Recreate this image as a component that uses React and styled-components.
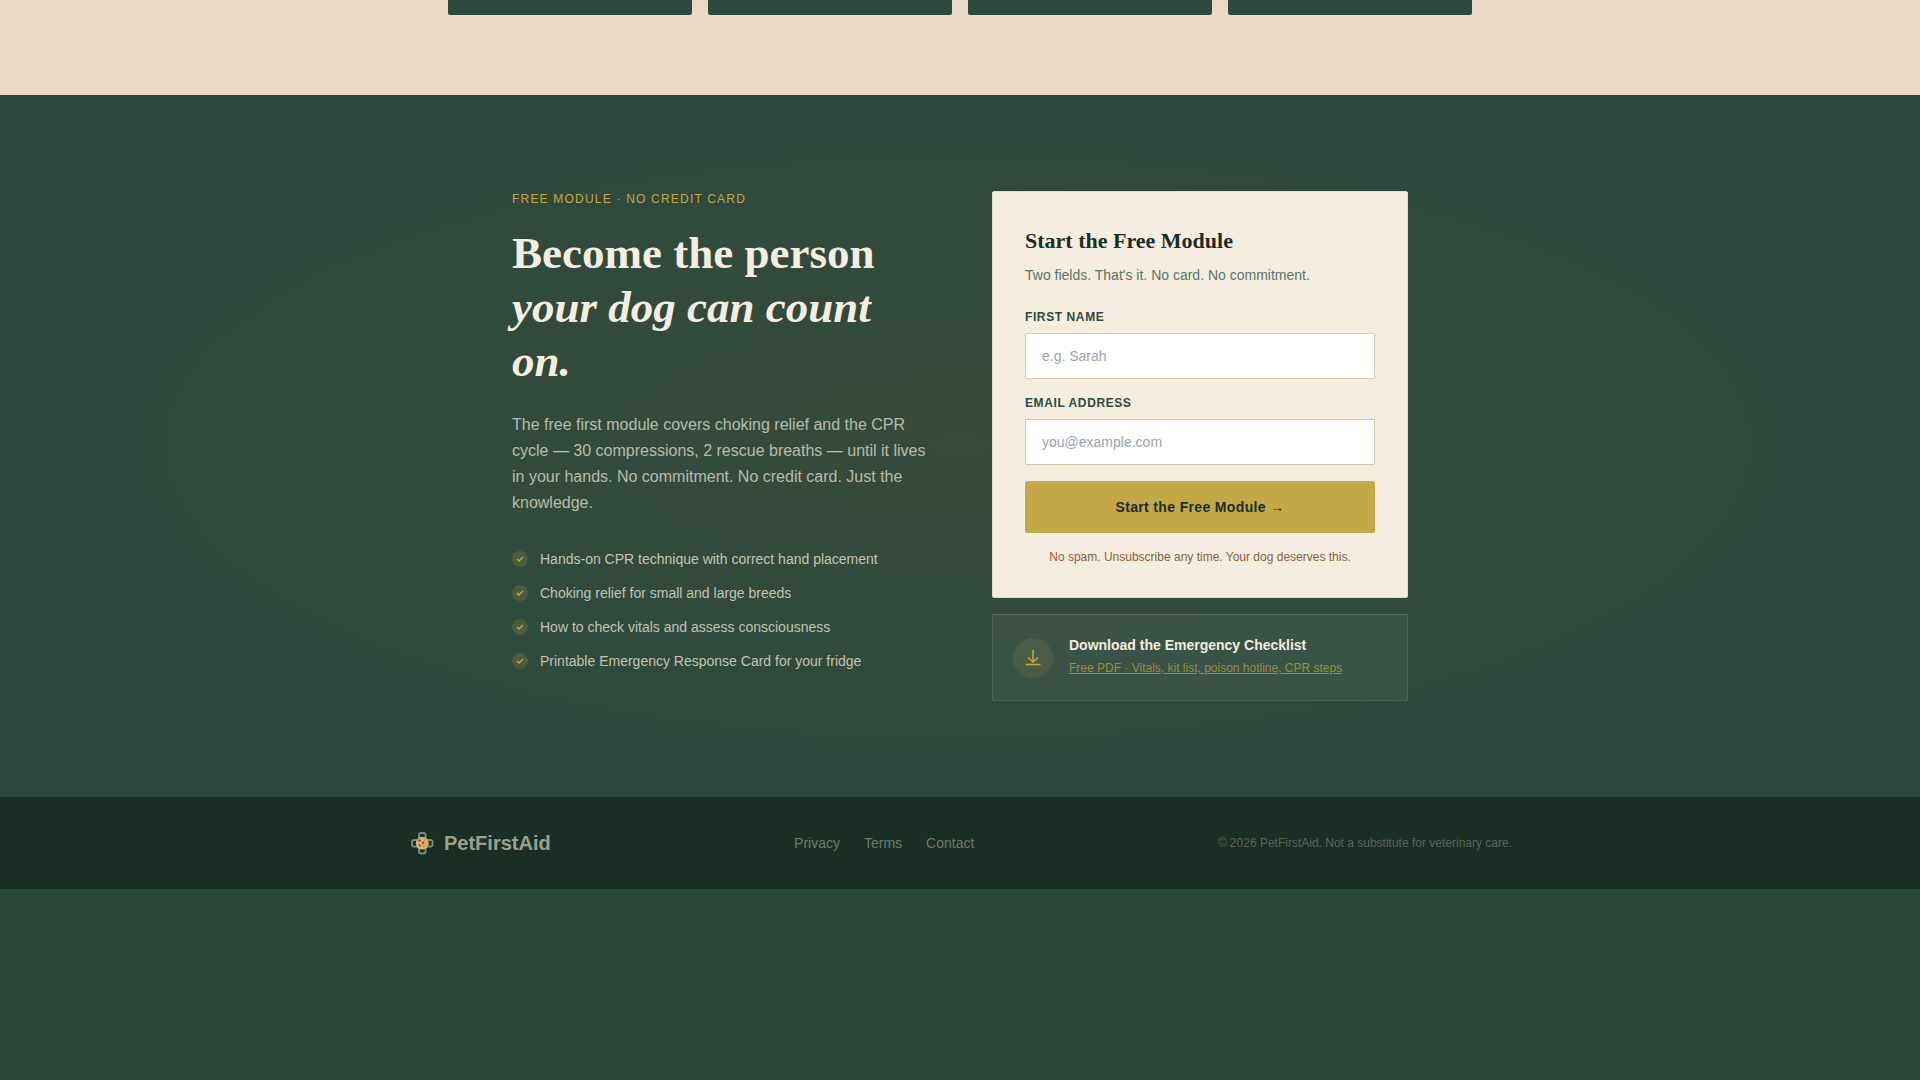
import React from 'react';
import styled, { createGlobalStyle } from 'styled-components';

const GlobalStyle = createGlobalStyle`
  *, *::before, *::after {
    box-sizing: border-box;
  }

  body {
    margin: 0;
    background: #284938;
    color: #f5eddf;
    font-family: 'Liberation Sans', Arial, sans-serif;
    font-size: 16px;
  }

  h1, h2, h3, p, ul {
    margin: 0;
    padding: 0;
  }
`;

const StatsSection = styled.section`
  padding: 0 24px 80px;
  background: #e9d9c5;
`;

const StatsGrid = styled.div`
  max-width: 1024px;
  margin: 0 auto;
  display: grid;
  grid-template-columns: repeat(4, 1fr);
  gap: 16px;
`;

const StatCard = styled.div`
  padding-top: 15px;
  background: #2d4a3e;
  border-radius: 0 0 2px 2px;
`;

const SignupSection = styled.section`
  padding: 96px 24px;
  background:
    radial-gradient(ellipse at 50% 50%, rgba(139, 74, 35, 0.1) 0%, transparent 65%),
    #2d4a3e;
`;

const SignupGrid = styled.div`
  max-width: 896px;
  margin: 0 auto;
  display: grid;
  grid-template-columns: 1fr 1fr;
  align-items: start;
  gap: 64px;
`;

const Eyebrow = styled.p`
  margin-bottom: 19px;
  color: #c4a747;
  font-size: 12px;
  line-height: 16px;
  letter-spacing: 0.1em;
  text-transform: uppercase;
`;

const Heading = styled.h2`
  margin-bottom: 24px;
  font-family: 'Liberation Serif', 'Times New Roman', serif;
  font-size: 45px;
  font-weight: 700;
  line-height: 54px;
`;

const Lead = styled.p`
  margin-bottom: 32px;
  color: rgba(245, 237, 223, 0.7);
  font-size: 16px;
  line-height: 26px;
`;

const Benefits = styled.ul`
  display: flex;
  flex-direction: column;
  gap: 12px;
  list-style: none;
`;

const Benefit = styled.li`
  display: flex;
  align-items: center;
  gap: 12px;
  color: rgba(245, 237, 223, 0.75);
  font-size: 14px;
  line-height: 22px;
`;

const IconCircle = styled.span`
  flex: none;
  display: flex;
  align-items: center;
  justify-content: center;
  width: ${({ $size }) => $size}px;
  height: ${({ $size }) => $size}px;
  border-radius: 50%;
  background: rgba(196, 167, 71, ${({ $alpha }) => $alpha});
`;

const SignupColumn = styled.div`
  display: flex;
  flex-direction: column;
  gap: 16px;
`;

const FormCard = styled.form`
  padding: 32px;
  border: 1px solid #e8d9c5;
  border-radius: 2px;
  background: #f5eddf;
`;

const FormTitle = styled.h3`
  margin-bottom: 6px;
  color: #1a2e25;
  font-family: 'Liberation Serif', 'Times New Roman', serif;
  font-size: 22px;
  font-weight: 700;
  line-height: 34px;
`;

const FormNote = styled.p`
  margin-bottom: 23px;
  color: #5a7364;
  font-size: 14px;
  line-height: 22px;
`;

const Field = styled.div`
  margin-bottom: 16px;
`;

const Label = styled.label`
  display: block;
  margin-bottom: 8px;
  color: #2d4a3e;
  font-size: 12px;
  font-weight: 700;
  line-height: 16px;
  letter-spacing: 0.05em;
  text-transform: uppercase;
`;

const Input = styled.input`
  display: block;
  width: 100%;
  height: 46px;
  padding: 0 16px;
  border: 1px solid #d9c8ae;
  border-radius: 1px;
  background: #fff;
  color: #1a2e25;
  font-family: inherit;
  font-size: 14px;

  &::placeholder {
    color: #9ca3af;
  }
`;

const SubmitButton = styled.button`
  width: 100%;
  height: 52px;
  border: 0;
  border-radius: 2px;
  background: #c4a747;
  color: #1a2e25;
  font-family: inherit;
  font-size: 14px;
  font-weight: 700;
  letter-spacing: 0.025em;
  cursor: pointer;
`;

const FinePrint = styled.p`
  margin-top: 16px;
  color: #8b5e3c;
  font-size: 12px;
  line-height: 16px;
  text-align: center;
`;

const ChecklistCard = styled.div`
  display: flex;
  align-items: center;
  gap: 16px;
  padding: 20px;
  border: 1px solid rgba(245, 237, 223, 0.12);
  border-radius: 2px;
  background: rgba(245, 237, 223, 0.06);
`;

const ChecklistTitle = styled.p`
  margin-bottom: 2px;
  font-size: 14px;
  font-weight: 700;
  line-height: 20px;
`;

const ChecklistLink = styled.a`
  display: block;
  color: rgba(196, 167, 71, 0.7);
  font-size: 12px;
  line-height: 23px;
`;

const Footer = styled.footer`
  padding: 32px 24px;
  background: #1a2e25;
`;

const FooterInner = styled.div`
  max-width: 1104px;
  margin: 0 auto;
  display: flex;
  align-items: center;
  justify-content: space-between;
`;

const Brand = styled.div`
  display: flex;
  align-items: center;
  gap: 8px;
  color: rgba(245, 237, 223, 0.6);
  font-size: 20px;
  font-weight: 700;
  line-height: 28px;
`;

const FooterNav = styled.nav`
  display: flex;
  gap: 24px;
`;

const FooterLink = styled.a`
  color: rgba(245, 237, 223, 0.4);
  font-size: 14px;
  text-decoration: none;
`;

const Copyright = styled.p`
  color: rgba(245, 237, 223, 0.3);
  font-size: 12px;
`;

const benefits = [
  'Hands-on CPR technique with correct hand placement',
  'Choking relief for small and large breeds',
  'How to check vitals and assess consciousness',
  'Printable Emergency Response Card for your fridge',
];

const CheckIcon = () => (
  <svg width="8" height="8" viewBox="0 0 8 8" fill="none" aria-hidden="true">
    <path d="M1 4l2 2 4-4" stroke="#c4a747" strokeWidth="1.4" />
  </svg>
);

const DownloadIcon = () => (
  <svg width="18" height="18" viewBox="0 0 18 18" fill="none" aria-hidden="true">
    <path d="M9 1v12M4 8.500l5 4.500 5-4.500M1.500 15.500h15" stroke="#c4a747" strokeWidth="1.5" />
  </svg>
);

const Logo = () => (
  <svg width="28" height="28" viewBox="0 0 28 28" fill="none" aria-hidden="true">
    <g stroke="#76907c" strokeWidth="1.9">
      <rect x="11" y="4" width="6.600" height="8" rx="2.200" />
      <rect x="11" y="16.500" width="6.600" height="8" rx="2.200" />
      <rect x="4" y="11" width="8" height="6.600" rx="2.200" />
      <rect x="16.500" y="11" width="8" height="6.600" rx="2.200" />
    </g>
    <circle cx="14.200" cy="14.200" r="6.400" fill="#dfae74" />
    <path d="M15 8a6.400 6.400 0 0 1 3.500 11l-3-3.500z" fill="#dfb04c" />
    <path
      d="M9.500 11.500l2-1.500 1.800 1.300-1 1.700zM13.500 13l2.200-.8.600 2-1.800 1.200zM10.300 14.800l2 .3.800 2-1.700.6z"
      fill="#93532f"
    />
    <path d="M15.600 10.200l1.300.6-.4 1zM14.600 17.200l1.800-.6-.3 1.700z" fill="#a9682f" />
    <path d="M11.800 13.300l1.500.3-.3 1.200zM14.200 10.300l.8 1.200-1 .3z" fill="#f5e3cf" />
  </svg>
);

const App = () => (
  <>
    <GlobalStyle />
    <StatsSection>
      <StatsGrid>
        <StatCard />
        <StatCard />
        <StatCard />
        <StatCard />
      </StatsGrid>
    </StatsSection>

    <SignupSection>
      <SignupGrid>
        <div>
          <Eyebrow>Free Module · No Credit Card</Eyebrow>
          <Heading>
            Become the person
            <br />
            <em>your dog can count on.</em>
          </Heading>
          <Lead>
            The free first module covers choking relief and the CPR cycle — 30 compressions, 2
            rescue breaths — until it lives in your hands. No commitment. No credit card. Just the
            knowledge.
          </Lead>
          <Benefits>
            {benefits.map((text) => (
              <Benefit key={text}>
                <IconCircle $size={16} $alpha={0.2}>
                  <CheckIcon />
                </IconCircle>
                {text}
              </Benefit>
            ))}
          </Benefits>
        </div>

        <SignupColumn>
          <FormCard>
            <FormTitle>Start the Free Module</FormTitle>
            <FormNote>Two fields. That's it. No card. No commitment.</FormNote>
            <Field>
              <Label htmlFor="first-name">First Name</Label>
              <Input id="first-name" type="text" placeholder="e.g. Sarah" />
            </Field>
            <Field>
              <Label htmlFor="email">Email Address</Label>
              <Input id="email" type="email" placeholder="you@example.com" />
            </Field>
            <SubmitButton type="submit">Start the Free Module →</SubmitButton>
            <FinePrint>No spam. Unsubscribe any time. Your dog deserves this.</FinePrint>
          </FormCard>

          <ChecklistCard>
            <IconCircle $size={40} $alpha={0.12}>
              <DownloadIcon />
            </IconCircle>
            <div>
              <ChecklistTitle>Download the Emergency Checklist</ChecklistTitle>
              <ChecklistLink href="#checklist">
                Free PDF · Vitals, kit list, poison hotline, CPR steps
              </ChecklistLink>
            </div>
          </ChecklistCard>
        </SignupColumn>
      </SignupGrid>
    </SignupSection>

    <Footer>
      <FooterInner>
        <Brand>
          <Logo />
          PetFirstAid
        </Brand>
        <FooterNav>
          <FooterLink href="#privacy">Privacy</FooterLink>
          <FooterLink href="#terms">Terms</FooterLink>
          <FooterLink href="#contact">Contact</FooterLink>
        </FooterNav>
        <Copyright>© 2026 PetFirstAid. Not a substitute for veterinary care.</Copyright>
      </FooterInner>
    </Footer>
  </>
);

export default App;
